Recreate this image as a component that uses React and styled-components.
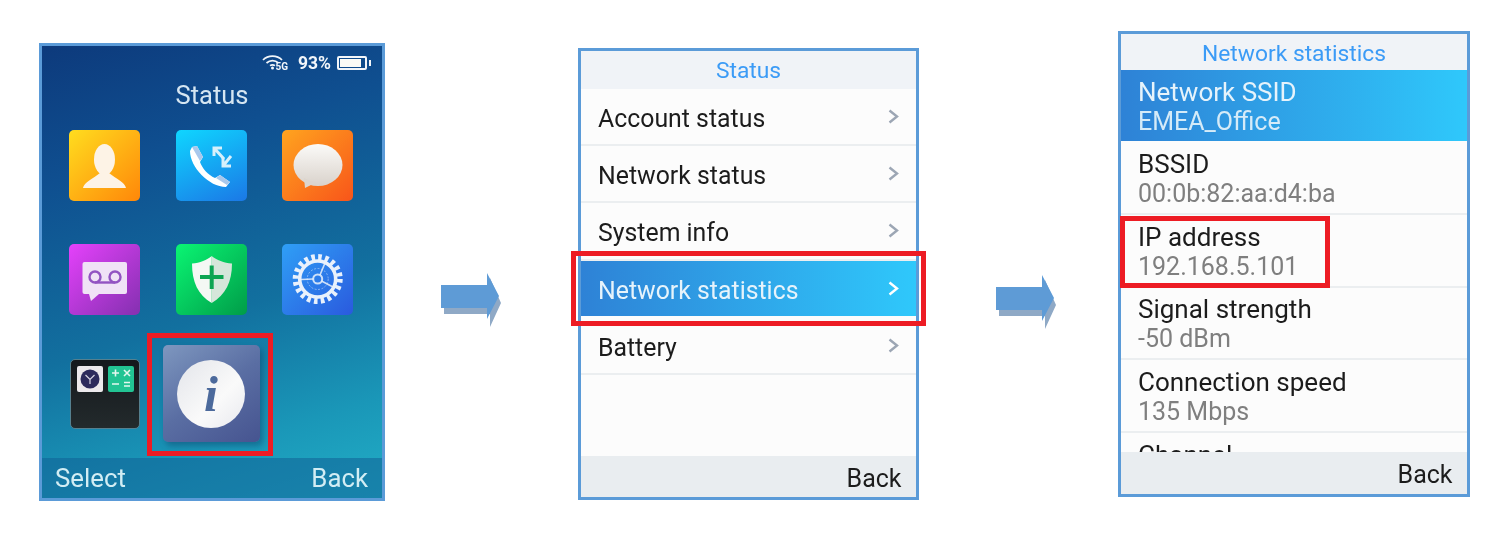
import styled, { createGlobalStyle } from 'styled-components';

const BORDER = '#5b9bd8';
const RED = '#ed1c24';

const GlobalStyle = createGlobalStyle`
  html, body {
    margin: 0;
    background: #fff;
  }
  body {
    font-family: Roboto, "Liberation Sans", sans-serif;
  }
`;

const Page = styled.div`
  display: flex;
  align-items: flex-start;
  width: 1507px;
  height: 552px;
  padding-left: 39px;
  box-sizing: border-box;
  overflow: hidden;
  filter: blur(0.35px);
`;

const Phone = styled.div`
  position: relative;
  flex: none;
  display: flex;
  flex-direction: column;
  box-sizing: border-box;
  width: ${p => p.$width}px;
  height: ${p => p.$height}px;
  margin-top: ${p => p.$top}px;
  border: 3px solid ${BORDER};
  background: ${p => p.$dark
    ? 'linear-gradient(163deg, #0d3a7c 0%, #0f4f90 25%, #12709f 58%, #1a97b8 82%, #22aec6 100%)'
    : '#fcfcfc'};
`;

const Highlight = styled.div`
  position: absolute;
  box-sizing: border-box;
  left: ${p => p.$left}px;
  top: ${p => p.$top}px;
  width: ${p => p.$width}px;
  height: ${p => p.$height}px;
  border: 5px solid ${RED};
  pointer-events: none;
`;

const ArrowWrap = styled.svg`
  flex: none;
  display: block;
  width: 62px;
  height: 56px;
  margin: ${p => p.$top}px ${p => p.$right}px 0 ${p => p.$left}px;
`;

/* home screen */
const StatusBar = styled.div`
  display: flex;
  align-items: center;
  justify-content: flex-end;
  height: 34px;
  padding: 0 12px 0 0;
  color: #f2f6fa;
  svg {
    margin-top: -3px;
  }
`;

const WifiText = styled.span`
  font-size: 10px;
  font-weight: 700;
  margin: 6px 0 0 -8px;
`;

const Percent = styled.span`
  font-size: 17.5px;
  font-weight: 700;
  margin: 0 6px 0 10px;
`;

const Battery = styled.div`
  position: relative;
  box-sizing: border-box;
  width: 30px;
  height: 14px;
  padding: 1px 4px 1px 1px;
  border: 2px solid #f2f6fa;
  border-radius: 2px;
  margin-right: 3px;
  &::before {
    content: '';
    display: block;
    height: 100%;
    background: #fbfbf6;
  }
  &::after {
    content: '';
    position: absolute;
    right: -6px;
    top: 2px;
    width: 2px;
    height: 6px;
    background: #f2f6fa;
  }
`;

const HomeTitle = styled.div`
  text-align: center;
  font-size: 25.5px;
  line-height: 30px;
  color: #d6e6f2;
`;

const IconGrid = styled.div`
  display: grid;
  grid-template-columns: repeat(3, 71px);
  grid-auto-rows: 71px;
  column-gap: 35.5px;
  row-gap: 43px;
  place-items: center;
  padding: 20px 0 0 27px;
`;

const Tile = styled.div`
  width: 71px;
  height: 71px;
  border-radius: 5px;
  background: linear-gradient(${p => p.$angle || 135}deg, ${p => p.$from}, ${p => p.$to});
  svg {
    display: block;
  }
`;

const FolderTile = styled.div`
  box-sizing: border-box;
  width: 70px;
  height: 70px;
  border-radius: 5px;
  border: 1px solid #55808f;
  background: linear-gradient(180deg, #14181c, #232a2c);
  padding: 6px;
  svg {
    display: block;
  }
`;

const InfoTile = styled.div`
  flex: none;
  position: relative;
  display: flex;
  align-items: center;
  justify-content: center;
  width: 97px;
  height: 97px;
  border-radius: 5px;
  background: linear-gradient(145deg, #7e97bf 0%, #5a6ea3 50%, #465490 100%);
  box-shadow: 3px 4px 6px rgba(15, 60, 100, 0.45);
`;

const InfoCircle = styled.div`
  display: flex;
  align-items: center;
  justify-content: center;
  width: 68px;
  height: 68px;
  border-radius: 50%;
  background: linear-gradient(135deg, #e3e5ea, #fafafa 60%, #e8e9ee);
`;

const InfoGlyph = styled.span`
  font-family: "Liberation Serif", serif;
  font-style: italic;
  font-weight: 700;
  font-size: 50px;
  line-height: 1;
  color: #4c6a9c;
`;

const HomeFooter = styled.div`
  margin-top: auto;
  display: flex;
  align-items: center;
  justify-content: space-between;
  height: 40px;
  padding: 0 14px 0 13px;
  font-size: 25.8px;
  color: #d2edf4;
  background: rgba(16, 96, 150, 0.55);
`;

/* list screens */
const Header = styled.div`
  flex: none;
  height: ${p => p.$height}px;
  line-height: ${p => p.$height + p.$nudge * 2}px;
  text-align: center;
  font-size: 22.8px;
  color: #3b9bf6;
  background: #f0f3f7;
`;

const List = styled.div`
  flex: 1;
  min-height: 0;
  overflow: hidden;
`;

const MenuRow = styled.div`
  display: flex;
  align-items: center;
  justify-content: space-between;
  box-sizing: border-box;
  height: 57.2px;
  padding: 4px 17px 0 17px;
  font-size: 24.85px;
  color: ${p => (p.$selected ? '#e6f3fb' : '#1c1c1c')};
  border-bottom: 2px solid ${p => (p.$selected ? '#fcfcfc' : '#ebeef0')};
  background: ${p => (p.$selected ? 'linear-gradient(90deg, #2e82d6, #2fc8fb)' : 'transparent')};
  svg {
    margin-top: -4px;
    color: ${p => (p.$selected ? '#ffffff' : '#9ca6b4')};
  }
`;

const StatRow = styled.div`
  box-sizing: border-box;
  height: 72.6px;
  padding: 7.6px 17px 0;
  border-bottom: 2px solid ${p => (p.$selected ? '#fcfcfc' : '#ebeef0')};
  background: ${p => (p.$selected ? 'linear-gradient(90deg, #2e82d6, #2fc8fb)' : 'transparent')};
`;

const StatName = styled.div`
  font-size: 26px;
  line-height: 29px;
  color: ${p => (p.$selected ? '#e6f3fb' : '#1c1c1c')};
`;

const StatValue = styled.div`
  font-size: 25px;
  line-height: 29px;
  color: ${p => (p.$selected ? '#d5ebf8' : '#7f7f7f')};
`;

const Footer = styled.div`
  flex: none;
  display: flex;
  align-items: center;
  justify-content: flex-end;
  box-sizing: border-box;
  height: ${p => p.$height}px;
  padding: ${p => p.$nudge}px 14.5px 0 0;
  font-size: 25px;
  color: #1c1c1c;
  background: #e9edf0;
`;

function Arrow(props) {
  return (
    <ArrowWrap viewBox="0 0 62 56" {...props}>
      <polygon points="3,17 49,17 49,5 60,30 49,54 49,41 3,41" fill="#8fa9c6" />
      <polygon points="0,12 46,12 46,0 58,23 46,46 46,35 0,35" fill="#5e9bd6" />
    </ArrowWrap>
  );
}

function Chevron() {
  return (
    <svg width="11" height="15" viewBox="0 0 11 15" fill="none">
      <polyline points="1.5,1.5 9,7.5 1.5,13.5" stroke="currentColor" strokeWidth="2.4" />
    </svg>
  );
}

function WifiIcon() {
  return (
    <svg width="21" height="16" viewBox="0 0 21 16" fill="none" stroke="#f2f6fa" strokeWidth="1.7">
      <path d="M1 6 C6 0.8 15 0.8 20 6" />
      <path d="M4.5 9 C8 5.8 13 5.8 16.5 9" />
      <path d="M8 11.6 C9.5 10.6 11.5 10.6 13 11.6" />
      <circle cx="10.5" cy="14" r="1.5" fill="#f2f6fa" stroke="none" />
    </svg>
  );
}

function ContactIcon() {
  return (
    <svg width="71" height="71" viewBox="0 0 71 71">
      <ellipse cx="35.5" cy="29.5" rx="10.5" ry="15.5" fill="#fdf3e6" />
      <path d="M14 58 C15 52 24 49 31 43 L40 43 C47 49 56 52 57 58 Z" fill="#fdf3e6" />
    </svg>
  );
}

function CallIcon() {
  return (
    <svg width="71" height="71" viewBox="0 0 71 71" fill="none">
      <path
        d="M14 21 C14 37 33 57 50 57 L54 52 L44 45 L39 48 C32 45 26 38 24 32 L27 27 L21 16 L16 17 Z"
        fill="#ffffff"
      />
      <path d="M16 17 L21 16 L27 27 L24 31 Z" fill="#a9c8ec" />
      <path d="M44 45 L54 52 L51 55 L40 48 Z" fill="#a9c8ec" />
      <path d="M48 29 L38 18 M38 26 L38 18 L46 18" stroke="#d6f0fb" strokeWidth="3" />
      <path d="M55 26 L47 36 M47 28 L47 36 L55 36" stroke="#d6f0fb" strokeWidth="3" />
    </svg>
  );
}

function MessageIcon() {
  return (
    <svg width="71" height="71" viewBox="0 0 71 71">
      <defs>
        <linearGradient id="bubble" x1="0" y1="0" x2="0" y2="1">
          <stop offset="0" stopColor="#fbfaf8" />
          <stop offset="1" stopColor="#d9d2cb" />
        </linearGradient>
      </defs>
      <ellipse cx="36" cy="35" rx="24.5" ry="21" fill="url(#bubble)" />
      <path d="M22 48 L23 58 L33 53 Z" fill="#dcd5ce" />
    </svg>
  );
}

function VoicemailIcon() {
  return (
    <svg width="71" height="71" viewBox="0 0 71 71" fill="none">
      <rect x="13.5" y="18" width="44.5" height="32" rx="2" fill="#f0e2f6" />
      <path d="M20 50 L22 57 L30 50 Z" fill="#f0e2f6" />
      <circle cx="26" cy="33" r="5.5" stroke="#9254c2" strokeWidth="2.4" />
      <circle cx="46" cy="33" r="5.5" stroke="#9254c2" strokeWidth="2.4" />
      <path d="M26 38.5 H46" stroke="#9254c2" strokeWidth="2.4" />
    </svg>
  );
}

function ShieldIcon() {
  return (
    <svg width="71" height="71" viewBox="0 0 71 71" fill="none">
      <path d="M35.7 12 C31 16 24 19 16 19.5 C16 38 22 51 35.7 59 Z" fill="#f4f8f4" />
      <path d="M35.7 12 C40.5 16 48 19 56 19.5 C56 38 49.5 51 35.7 59 Z" fill="#d5e6da" />
      <path d="M24 33 H47.5 M35.7 21.5 V45" stroke="#0ca552" strokeWidth="4" />
    </svg>
  );
}

function GearIcon() {
  return (
    <svg width="71" height="71" viewBox="0 0 71 71" fill="none" stroke="#e9f1fc">
      <circle cx="35.7" cy="35" r="22" strokeWidth="6" strokeDasharray="3.6 3.3" />
      <circle cx="35.7" cy="35" r="18" strokeWidth="3.6" />
      <circle cx="35.7" cy="35" r="10.5" strokeWidth="0.8" strokeDasharray="2 1.5" opacity="0.6" />
      <circle cx="35.7" cy="35" r="4.5" strokeWidth="2" opacity="0.85" />
      <path d="M38 31 L43 19 M39.5 37 L51 43 M31.5 35 L19 35.5" strokeWidth="1.6" opacity="0.85" />
    </svg>
  );
}

function FolderIcon() {
  return (
    <svg width="58" height="27" viewBox="0 0 58 27" fill="none">
      <rect x="0" y="0" width="26" height="26" rx="2" fill="#ece9ec" />
      <circle cx="13" cy="13" r="9.5" fill="#2c2a5c" />
      <path d="M8.5 9 L13 13.5 L17.5 9 M13 13.5 V18" stroke="#d7d5e3" strokeWidth="1.2" />
      <rect x="31" y="0" width="26" height="26" rx="2" fill="#22c493" />
      <path
        d="M35 7 H42 M38.5 3.5 V10.5 M47 4 L53 10 M53 4 L47 10 M35 18 H42 M47 16.5 H53 M47 20 H53"
        stroke="#e4f7ef"
        strokeWidth="1.6"
      />
    </svg>
  );
}

const MENU = ['Account status', 'Network status', 'System info', 'Network statistics', 'Battery'];

const STATS = [
  ['Network SSID', 'EMEA_Office'],
  ['BSSID', '00:0b:82:aa:d4:ba'],
  ['IP address', '192.168.5.101'],
  ['Signal strength', '-50 dBm'],
  ['Connection speed', '135 Mbps'],
  ['Channel'],
];

export default function App() {
  return (
    <Page>
      <GlobalStyle />

      <Phone $dark $width={346} $height={458} $top={43}>
        <StatusBar>
          <WifiIcon />
          <WifiText>5G</WifiText>
          <Percent>93%</Percent>
          <Battery />
        </StatusBar>
        <HomeTitle>Status</HomeTitle>
        <IconGrid>
          <Tile $from="#ffdd1f" $to="#ff8709"><ContactIcon /></Tile>
          <Tile $from="#0fd6ff" $to="#1b78e6" $angle={155}><CallIcon /></Tile>
          <Tile $from="#ffa41f" $to="#f8551a"><MessageIcon /></Tile>
          <Tile $from="#e541fb" $to="#8430b0"><VoicemailIcon /></Tile>
          <Tile $from="#0af573" $to="#009c48"><ShieldIcon /></Tile>
          <Tile $from="#2f9ff6" $to="#2a5ade"><GearIcon /></Tile>
          <FolderTile><FolderIcon /></FolderTile>
          <InfoTile>
            <InfoCircle><InfoGlyph>i</InfoGlyph></InfoCircle>
          </InfoTile>
        </IconGrid>
        <HomeFooter>
          <span>Select</span>
          <span>Back</span>
        </HomeFooter>
        <Highlight $left={105} $top={287} $width={126} $height={123} />
      </Phone>

      <Arrow $left={56} $right={75} $top={273} />

      <Phone $width={341} $height={452} $top={48}>
        <Header $height={38} $nudge={1}>Status</Header>
        <List>
          {MENU.map(item => (
            <MenuRow key={item} $selected={item === 'Network statistics'}>
              <span>{item}</span>
              <Chevron />
            </MenuRow>
          ))}
        </List>
        <Footer $height={41} $nudge={3}>Back</Footer>
        <Highlight $left={-10} $top={200} $width={355} $height={75} />
      </Phone>

      <Arrow $left={77} $right={60} $top={275} />

      <Phone $width={352} $height={466} $top={31}>
        <Header $height={36} $nudge={2}>Network statistics</Header>
        <List>
          {STATS.map(([name, value], i) => (
            <StatRow key={name} $selected={i === 0}>
              <StatName $selected={i === 0}>{name}</StatName>
              {value && <StatValue $selected={i === 0}>{value}</StatValue>}
            </StatRow>
          ))}
        </List>
        <Footer $height={42.5} $nudge={3}>Back</Footer>
        <Highlight $left={-1} $top={182} $width={210} $height={72} />
      </Phone>
    </Page>
  );
}
